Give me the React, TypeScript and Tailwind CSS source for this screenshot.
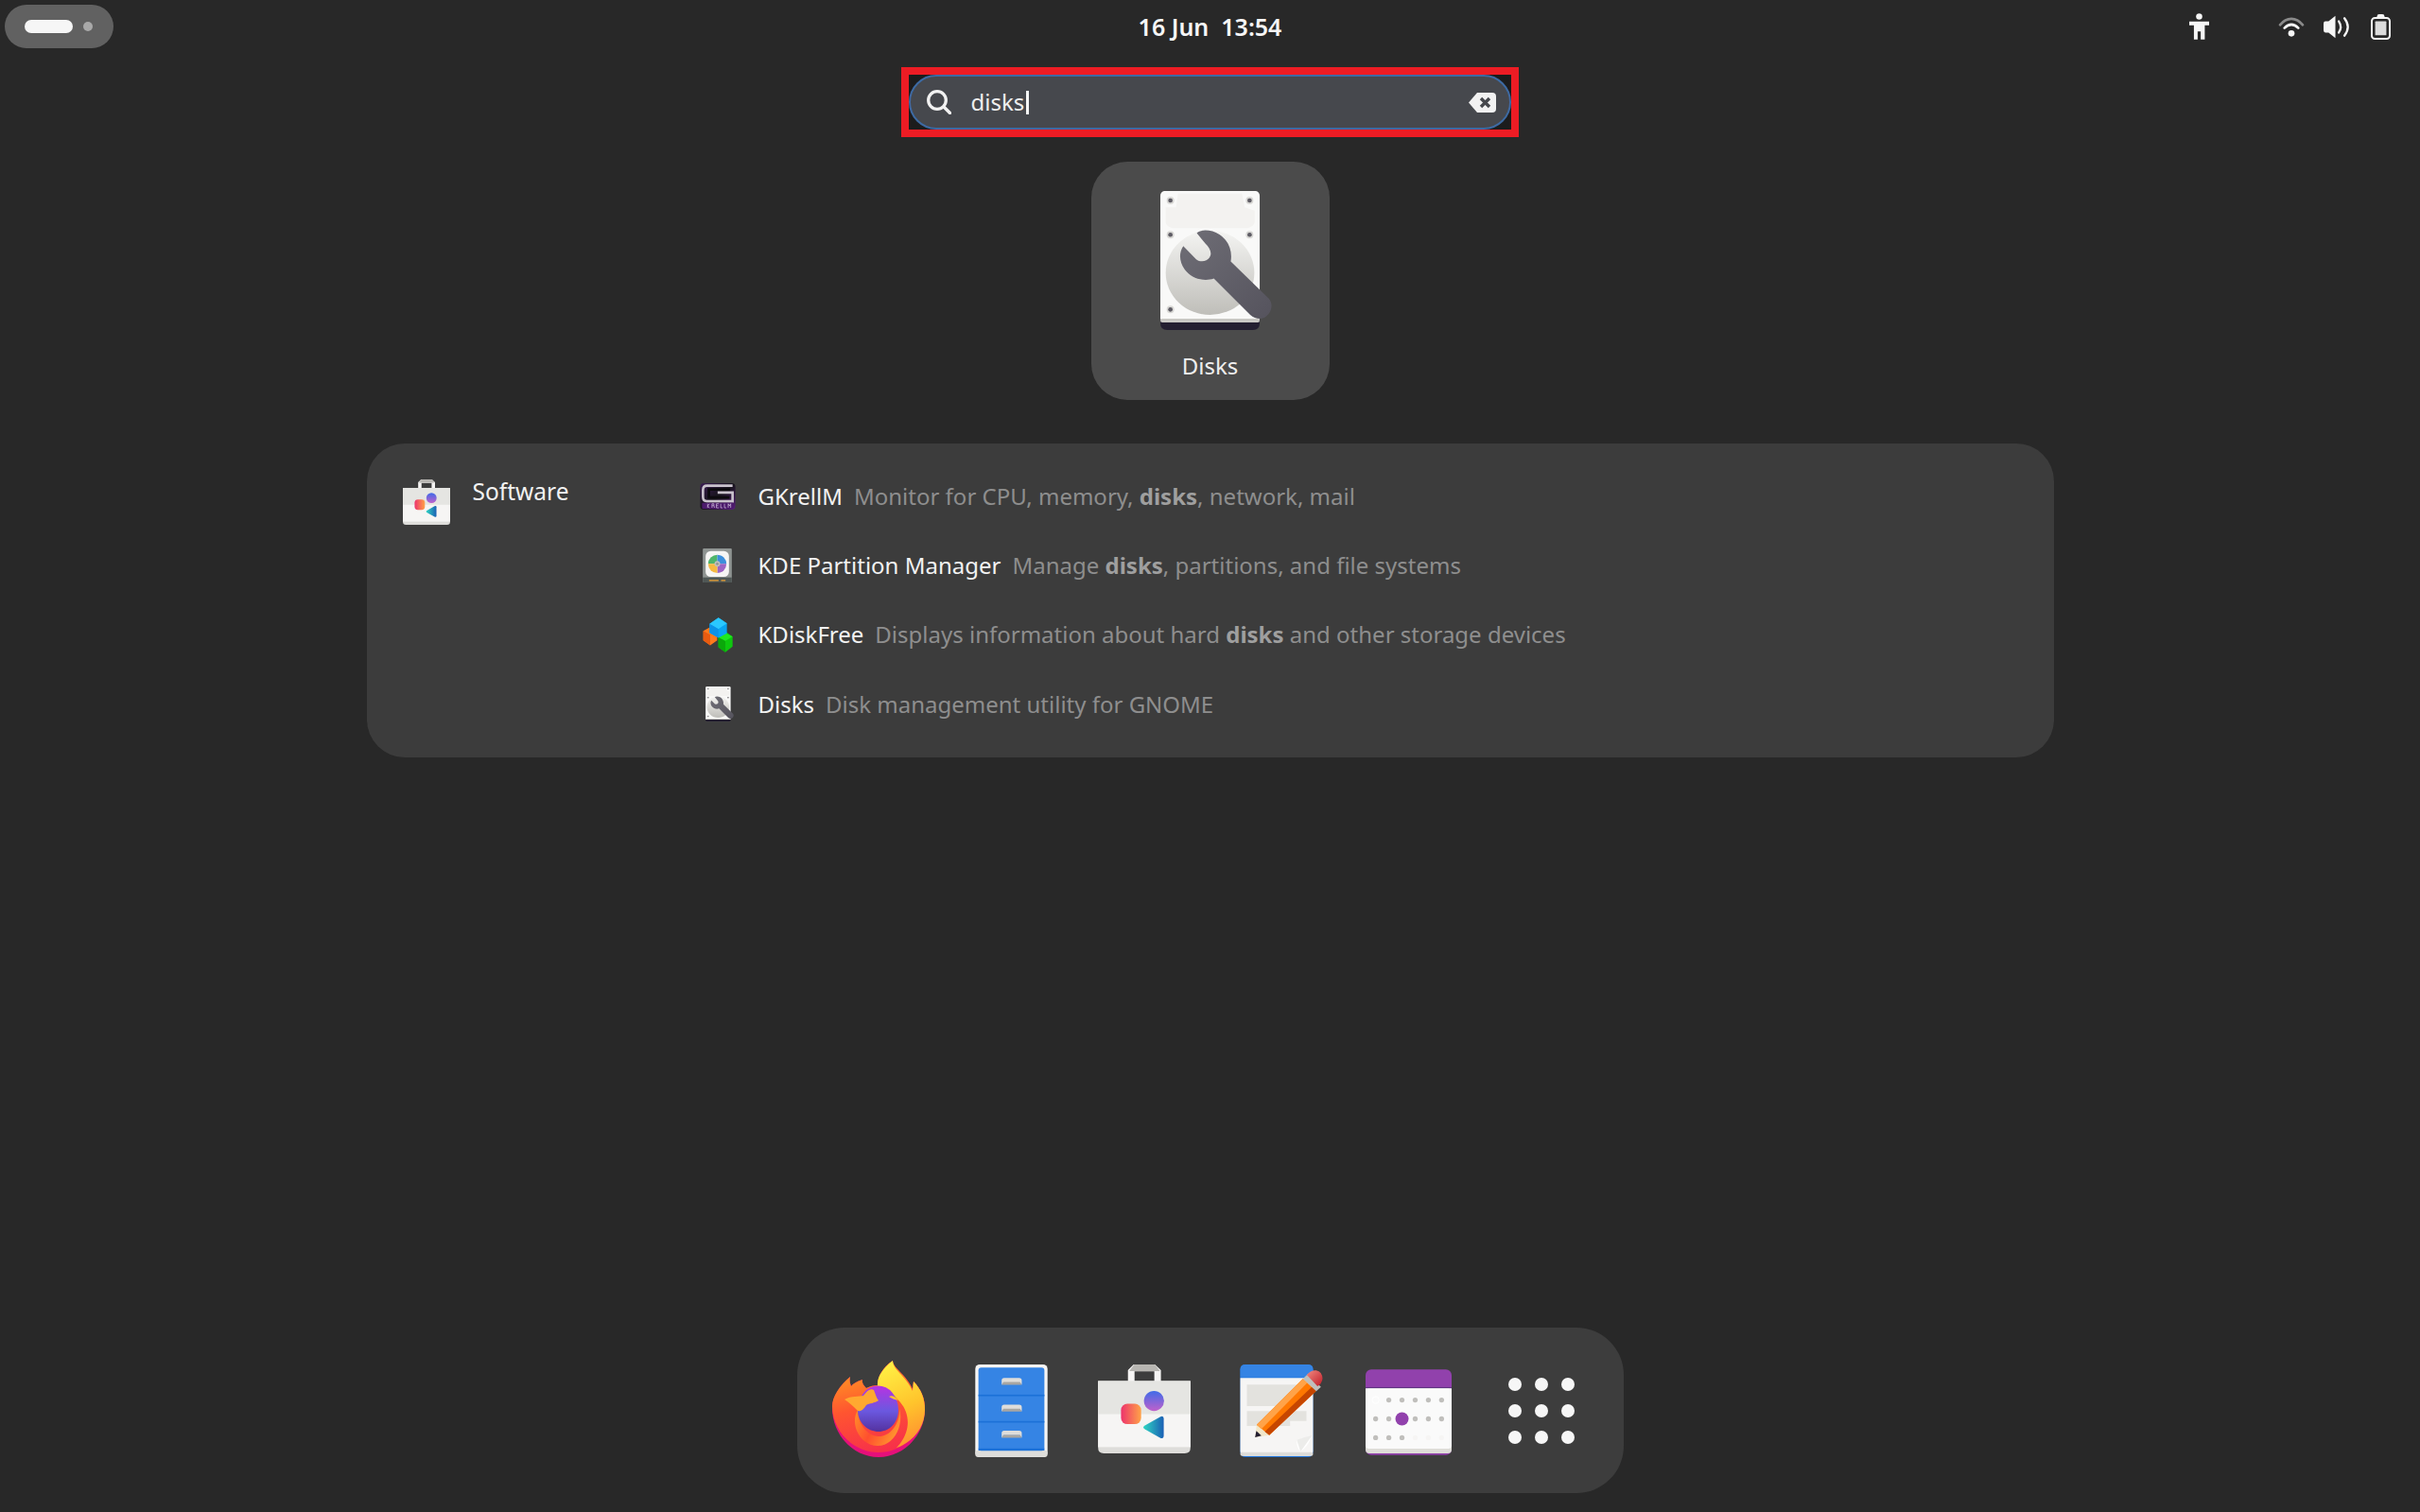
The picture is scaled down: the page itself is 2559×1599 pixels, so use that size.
import React from "react";

const sans = "font-['Noto_Sans','Open_Sans',sans-serif]";

function FirefoxIcon() {
  return (
    <svg viewBox="0 0 100 104" className="w-[100px] h-[104px] -mt-[1px] ml-[1px]">
      <defs>
        <linearGradient id="ffBody" x1="0.25" y1="0" x2="0.5" y2="1">
          <stop offset="0" stopColor="#ffa51f" />
          <stop offset="0.5" stopColor="#ff5530" />
          <stop offset="1" stopColor="#f7304a" />
        </linearGradient>
        <linearGradient id="ffTop" x1="0.35" y1="0" x2="0.6" y2="1">
          <stop offset="0" stopColor="#fff044" />
          <stop offset="0.55" stopColor="#ffc42c" />
          <stop offset="1" stopColor="#ff8f30" />
        </linearGradient>
        <linearGradient id="ffGlobe" x1="0.5" y1="0" x2="0.5" y2="1">
          <stop offset="0" stopColor="#b833e1" />
          <stop offset="0.55" stopColor="#6b58e0" />
          <stop offset="1" stopColor="#54329f" />
        </linearGradient>
        <linearGradient id="ffRing" x1="0" y1="0.2" x2="1" y2="0.6">
          <stop offset="0" stopColor="#ff8a2a" />
          <stop offset="0.45" stopColor="#ff4f2e" />
          <stop offset="1" stopColor="#ff9a2e" />
        </linearGradient>
      </defs>
      <path d="M0 50C0 78 22 102 49 102C76 102 98 78 98 52C98 40 94 30 86 22L85 30C78 14 64 8 64 0C52 8 48 18 48 26C44 26 40 27 36 29C33 26 31 23 32 20C26 22 22 24 20 27C19 24 18 21 19 17C8 26 0 38 0 50Z" fill="#e5107a" />
      <path d="M0 48C0 74 22 97 49 97C76 97 98 74 98 50C98 40 94 30 86 22L85 30C78 14 64 8 64 0C52 8 48 18 48 26C44 26 40 27 36 29C33 26 31 23 32 20C26 22 22 24 20 27C19 24 18 21 19 17C8 26 0 38 0 48Z" fill="url(#ffBody)" />
      <path d="M48 27C47 17 54 8 64 0C64 10 78 16 85 32L86 22C94 30 98 40 98 52C98 70 86 86 68 92C82 78 84 58 72 44C66 36 56 29 48 27Z" fill="url(#ffTop)" />
      <path d="M27 52C27 66 37 80 49 80C62 80 72 66 71 50C76 68 66 90 48 90C30 90 18 68 27 52Z" fill="url(#ffRing)" />
      <path d="M27 52A21 25 0 1 1 70 52C70 66 60 75 49 75C38 75 27 66 27 52Z" fill="url(#ffGlobe)" />
      <path d="M13 41C20 37 28 38 33 37C37 32 40 29 44 31C46 36 47 40 49 42C45 45 39 45 36 47C33 52 29 55 26 52C22 48 18 44 13 41Z" fill="#ffa930" />
      <path d="M60 38C63 36 67 38 70 42C66 41 63 40 60 38Z" fill="#ffc42c" />
    </svg>
  );
}

function FilesIcon() {
  return (
    <svg viewBox="575 127 230 295" className="w-[77px] h-[98px]">
      <rect x="575" y="127" width="230" height="295" rx="14" fill="#f6f5f4" />
      <rect x="575" y="400" width="230" height="22" rx="10" fill="#deddda" />
      <rect x="585" y="137" width="210" height="265" rx="9" fill="#3584e4" />
      <rect x="585" y="223" width="210" height="5" fill="#1c71d8" />
      <rect x="585" y="307" width="210" height="5" fill="#1c71d8" />
      <rect x="585" y="394" width="210" height="7" fill="#1c71d8" />
      {[170, 255, 338].map((y) => (
        <g key={y}>
          <path d={`M659 ${y + 22}V${y + 8}Q659 ${y} 667 ${y}H715Q723 ${y} 723 ${y + 8}V${y + 22}L717 ${y + 14}H665Z`} fill="#deddda" />
          <path d={`M659 ${y + 22}L665 ${y + 13}H717L723 ${y + 22}Z`} fill="#a8a6a2" />
        </g>
      ))}
    </svg>
  );
}

function BagIcon({ className }: { className: string }) {
  return (
    <svg viewBox="963 127 294 283" className={className}>
      <defs>
        <linearGradient id="bagC" x1="0" y1="0" x2="0" y2="1">
          <stop offset="0" stopColor="#3f6be8" />
          <stop offset="1" stopColor="#c061cb" />
        </linearGradient>
        <linearGradient id="bagS" x1="0" y1="0" x2="1" y2="0">
          <stop offset="0" stopColor="#ed336c" />
          <stop offset="1" stopColor="#ffa348" />
        </linearGradient>
        <linearGradient id="bagT" x1="0" y1="0" x2="1" y2="0">
          <stop offset="0" stopColor="#2fd6c3" />
          <stop offset="1" stopColor="#1a5fb4" />
        </linearGradient>
      </defs>
      <path d="M1058 182V145L1076 127H1144L1163 145V182H1142V149H1079V182Z" fill="#f6f5f4" />
      <path d="M1062 148L1078 127H1144L1160 148Z" fill="#b8b6b2" />
      <path d="M963 180H1257V392Q1257 410 1239 410H981Q963 410 963 392Z" fill="#deddda" />
      <rect x="963" y="180" width="294" height="210" fill="#f6f5f4" />
      <rect x="963" y="180" width="294" height="105" fill="#e5e5e2" />
      <circle cx="1141" cy="243" r="32" fill="url(#bagC)" />
      <rect x="1036" y="252" width="64" height="65" rx="20" fill="url(#bagS)" />
      <path d="M1112 321L1160 294Q1172 288 1172 300V352Q1172 366 1160 360L1112 333Q1102 327 1112 321Z" fill="url(#bagT)" />
    </svg>
  );
}

function EditorIcon() {
  return (
    <svg viewBox="63 127 293 294" className="w-[98px] h-[98px]">
      <defs>
        <linearGradient id="edE" x1="0" y1="0" x2="1" y2="1">
          <stop offset="0" stopColor="#f08a80" />
          <stop offset="1" stopColor="#c01c28" />
        </linearGradient>
      </defs>
      <rect x="94" y="127" width="231" height="294" rx="16" fill="#1c71d8" />
      <path d="M94 168V143Q94 127 110 127H309Q325 127 325 143V168Z" fill="#3584e4" />
      <path d="M94 170H325V402Q325 417 310 417H109Q94 417 94 402Z" fill="#f6f5f4" />
      <rect x="94" y="405" width="231" height="12" rx="6" fill="#deddda" />
      <path d="M115 191H304V243H247V259H115Z" fill="#e3e2de" />
      <path d="M115 275H304V306H252V322H115Z" fill="#e3e2de" />
      <path d="M273 366Q305 368 322 352Q310 386 285 404Q272 390 273 366Z" fill="#ffffff" />
      <path d="M322 352Q296 358 273 366L285 404Z" fill="#ececea" />
      <path d="M141 358L146 318L186 351Z" fill="#f1e7ca" />
      <path d="M141 358L145 338L161 353Z" fill="#241f31" />
      <path d="M146 318L293 172L335 211L186 351Z" fill="#ff7800" />
      <path d="M146 318L293 172L307 185L161 332Z" fill="#ffa348" />
      <path d="M172 340L321 198L335 211L186 351Z" fill="#c64600" />
      <path d="M293 172L308 158L350 198L335 212Z" fill="#c0bfbc" />
      <path d="M305 160Q318 144 335 146Q354 150 355 172Q353 188 339 196Z" fill="url(#edE)" />
    </svg>
  );
}

function CalendarIcon() {
  const rows: [number, number[], number[]][] = [
    [238, [566, 608, 650, 692, 734], []],
    [298, [524, 566, 650, 692, 734], []],
    [358, [524, 566, 608], [650, 692, 734]],
  ];
  return (
    <svg viewBox="492 141 274 272" className="w-[91px] h-[91px] mt-[3px]">
      <rect x="492" y="141" width="274" height="272" rx="18" fill="#9141ac" />
      <rect x="492" y="200" width="274" height="208" rx="12" fill="#deddd8" />
      <rect x="492" y="197" width="274" height="4" fill="#613583" />
      <path d="M492 201H766V382Q766 393 755 393H503Q492 393 492 382Z" fill="#fafafa" />
      <circle cx="524" cy="238" r="11" fill="none" stroke="#ffffff" strokeWidth="3" />
      {rows.map(([y, gray, light]) => (
        <g key={y}>
          {gray.map((x) => (
            <circle key={x} cx={x} cy={y} r="8" fill="#c0bfbc" />
          ))}
          {light.map((x) => (
            <circle key={x} cx={x} cy={y} r="8" fill="#f6f5f4" />
          ))}
        </g>
      ))}
      <circle cx="608" cy="298" r="21" fill="#9141ac" />
    </svg>
  );
}

function DisksIcon({ className }: { className: string }) {
  const screws = [[294, 158], [546, 158], [294, 267], [546, 267], [294, 505]];
  return (
    <svg viewBox="262 128 355 442" className={className}>
      <defs>
        <linearGradient id="dkP" x1="0" y1="0" x2="0" y2="1">
          <stop offset="0" stopColor="#f4f4f2" />
          <stop offset="1" stopColor="#bfbeb9" />
        </linearGradient>
        <linearGradient id="dkW" x1="0" y1="0" x2="1" y2="1">
          <stop offset="0" stopColor="#6f6e76" />
          <stop offset="1" stopColor="#55535d" />
        </linearGradient>
      </defs>
      <path d="M262 510H578V548Q578 570 556 570H284Q262 570 262 548Z" fill="#241f31" />
      <rect x="262" y="128" width="316" height="418" rx="14" fill="#f9f9f8" />
      <rect x="262" y="534" width="316" height="12" rx="6" fill="#c9c8c4" />
      <path d="M318 136H522L530 180L562 190V228Q560 240 540 246L300 246Q280 240 279 228V180H312Z" fill="#f3f2f0" />
      <ellipse cx="420" cy="388" rx="141" ry="134" fill="url(#dkP)" />
      {screws.map(([x, y]) => (
        <g key={`${x}-${y}`}>
          <circle cx={x} cy={y} r="12" fill="#d9d8d5" />
          <circle cx={x} cy={y} r="7" fill="#5e5c64" />
        </g>
      ))}
      <path d="M378 262C390 248 425 250 450 266C478 284 492 318 486 352L607 470C622 488 616 512 600 526C586 538 564 536 548 522L432 406C398 418 360 404 340 378C322 354 320 325 335 303L376 345C390 356 410 352 418 340C428 326 420 310 405 295Z" fill="url(#dkW)" />
    </svg>
  );
}

function GKrellMIcon() {
  return (
    <svg viewBox="0 0 113 85" className="w-[38px] h-[28px]">
      <defs>
        <linearGradient id="gkB" x1="0" y1="0" x2="1" y2="1">
          <stop offset="0" stopColor="#3b1d52" />
          <stop offset="0.5" stopColor="#17141c" />
          <stop offset="1" stopColor="#5b1f7e" />
        </linearGradient>
      </defs>
      <rect width="113" height="85" rx="12" fill="url(#gkB)" />
      <path d="M104 8H22Q9 8 9 22V44Q9 58 22 58H104V30H56" fill="none" stroke="#c9c2cc" strokeWidth="8" />
      <path d="M96 20H28V46H94" fill="none" stroke="#0c0a0e" strokeWidth="8" />
      <rect x="6" y="63" width="101" height="19" rx="3" fill="#4c1a6c" />
      <path d="M24 79V66M30 66L24 73L30 79M38 79V66H44V72H38M44 72L46 79M52 79V66H60M52 72H58M52 79H60M66 66V79H72M78 66V79H84M90 79V66L94 73L98 66V79" fill="none" stroke="#d9c8e4" strokeWidth="2" />
    </svg>
  );
}

function PartitionIcon() {
  return (
    <svg viewBox="0 0 92 108" className="w-[31px] h-[36px]">
      <rect width="92" height="108" rx="3" fill="#8f9492" />
      <rect y="92" width="92" height="16" fill="#4f5755" />
      <rect x="20" y="99" width="30" height="5" fill="#c68f3c" />
      <rect x="58" y="99" width="14" height="5" fill="#c68f3c" />
      <rect x="9" y="8" width="74" height="82" rx="16" fill="#f6f5f4" />
      <path d="M46 49L17 49A29 29 0 0 1 46 20Z" fill="#4fb56b" />
      <path d="M46 49V20A29 29 0 0 1 75 49Z" fill="#3d8edb" />
      <path d="M46 49H75A29 29 0 0 1 46 78Z" fill="#9c64c4" />
      <path d="M46 49V78A29 29 0 0 1 17 49Z" fill="#f5b942" />
      <circle cx="46" cy="49" r="9" fill="#c0bfbc" />
      <circle cx="46" cy="49" r="4" fill="#8f9492" />
    </svg>
  );
}

function KDiskFreeIcon() {
  return (
    <svg viewBox="0 0 96 110" className="w-[32px] h-[37px]">
      <path d="M2 42L24 30L46 44V72L24 88L2 72Z" fill="#ff7a1c" />
      <path d="M2 42L24 54V88L2 72Z" fill="#e85b10" />
      <path d="M50 52L72 44L95 60V92L72 110L50 94Z" fill="#0ec70e" />
      <path d="M50 62L72 74V110L50 94Z" fill="#0aa80a" />
      <path d="M72 74L95 60L72 48L50 62Z" fill="#1fe81f" />
      <path d="M22 20L50 0L77 18V50L50 64L22 48Z" fill="#0aa4f0" />
      <path d="M22 20L50 36L77 18L50 0Z" fill="#2ac8ff" />
      <path d="M22 20L50 36V64L22 48Z" fill="#0c92e6" />
    </svg>
  );
}

function AccessIcon() {
  return (
    <svg viewBox="105 42 64 84" className="w-[21px] h-[28px] fill-[#f6f6f6]">
      <circle cx="137" cy="52" r="10" />
      <path d="M105 68H169V80H155V126H142V100H132V126H120V80H105Z" />
    </svg>
  );
}

function WifiIcon() {
  return (
    <svg viewBox="378 50 84 66" className="w-[28px] h-[22px]" fill="none">
      <path d="M384 78C405 52 435 52 456 78" stroke="#8a8a8a" strokeWidth="8" strokeLinecap="round" />
      <path d="M398 88C412 74 428 74 442 88" stroke="#f6f6f6" strokeWidth="8" strokeLinecap="round" />
      <circle cx="420" cy="105" r="10" fill="#f6f6f6" />
    </svg>
  );
}

function SoundIcon() {
  return (
    <svg viewBox="525 46 85 76" className="w-[28px] h-[25px]" fill="none">
      <path d="M563 48V120L541 102H531Q525 102 525 95V73Q525 66 531 66H541Z" fill="#f6f6f6" />
      <path d="M574 66Q586 84 574 102" stroke="#f6f6f6" strokeWidth="7" strokeLinecap="round" />
      <path d="M592 56Q614 84 592 112" stroke="#f6f6f6" strokeWidth="7" strokeLinecap="round" />
    </svg>
  );
}

function BatteryIcon() {
  return (
    <svg viewBox="683 43 64 82" className="w-[21px] h-[27px]" fill="none">
      <path d="M703 56V50Q703 43 710 43H720Q727 43 727 50V56Z" fill="#f6f6f6" />
      <rect x="686" y="55" width="58" height="67" rx="10" stroke="#f6f6f6" strokeWidth="6" />
      <rect x="697" y="66" width="36" height="45" rx="2" fill="#dcdcdc" />
    </svg>
  );
}

function SearchIcon() {
  return (
    <svg viewBox="0 0 26 26" className="w-[26px] h-[26px]" fill="none">
      <circle cx="11" cy="11" r="9.3" stroke="#f2f2f2" strokeWidth="3.3" />
      <path d="M18 18L24.5 24.5" stroke="#f2f2f2" strokeWidth="3.3" strokeLinecap="round" />
    </svg>
  );
}

function ClearIcon() {
  return (
    <svg viewBox="0 0 29 21" className="w-[29px] h-[21px]">
      <path d="M9 0H25Q29 0 29 4V17Q29 21 25 21H9L0 10.5Z" fill="#f2f2f2" />
      <path d="M13 6L22 15M22 6L13 15" stroke="#46484d" strokeWidth="3.4" />
    </svg>
  );
}

function Row({ icon, title, children }: { icon: React.ReactNode; title: string; children: React.ReactNode }) {
  return (
    <div className="h-[73.33px] flex items-center">
      <div className="w-[40px] flex justify-center">{icon}</div>
      <div className="ml-[23px] flex items-baseline gap-[12px] text-[24px] leading-none whitespace-nowrap">
        <span className="text-[#f2f2f2]">{title}</span>
        <span className="text-[#8e8e8e]">{children}</span>
      </div>
    </div>
  );
}

const Bold = ({ children }: { children: string }) => <b className="font-bold text-[#9f9f9f]">{children}</b>;

export default function App() {
  return (
    <div className={`${sans} h-[1599px] w-full overflow-hidden bg-[#282828] flex flex-col items-center text-[#f2f2f2]`}>
      <div className="w-full h-[56px] shrink-0 grid grid-cols-3 items-center">
        <div className="pl-[5px]">
          <div className="w-[115px] h-[46px] rounded-full bg-[#616161] flex items-center pl-[21px] gap-[11px]">
            <div className="w-[51px] h-[14px] rounded-full bg-[#f6f6f6]" />
            <div className="w-[10px] h-[10px] rounded-full bg-[#a9a9a9]" />
          </div>
        </div>
        <div className="text-center text-[25px] font-semibold whitespace-pre leading-none text-[#f6f6f6]">16 Jun  13:54</div>
        <div className="flex justify-end items-center pr-[31px]">
          <AccessIcon />
          <div className="ml-[73px]"><WifiIcon /></div>
          <div className="ml-[20px]"><SoundIcon /></div>
          <div className="ml-[22px]"><BatteryIcon /></div>
        </div>
      </div>

      <div className="mt-[15px] w-[653px] h-[74px] -ml-[1px] shrink-0 border-8 border-[#ed1c24] bg-[#1c1c1c]">
        <div className="h-full rounded-full bg-[#46484d] border-2 border-[#3d6aa3] flex items-center pl-[17px] pr-[14px]">
          <SearchIcon />
          <div className="ml-[21px] text-[24px] leading-none text-[#eeeeee] flex items-center">
            disks
            <div className="ml-[2px] w-[3px] h-[25px] bg-[#f6f6f6]" />
          </div>
          <div className="ml-auto mt-[1px]"><ClearIcon /></div>
        </div>
      </div>

      <div className="mt-[26px] w-[252px] h-[252px] shrink-0 rounded-[38px] bg-[#4b4b4b] flex flex-col items-center pt-[31px]">
        <DisksIcon className="w-[118px] h-[147px] ml-[12px]" />
        <div className="mt-[23px] text-[24px] leading-[30px] text-[#eeeeee]">Disks</div>
      </div>

      <div className="mt-[46px] w-[1784px] h-[332px] shrink-0 rounded-[40px] bg-[#3c3c3c] flex">
        <div className="w-[351px] pl-[38px] pt-[38px] flex items-start">
          <BagIcon className="w-[50px] h-[48px]" />
          <div className="ml-[24px] -mt-[5px] text-[24.5px] leading-[36px] text-[#f2f2f2]">Software</div>
        </div>
        <div className="pt-[19px]">
          <Row icon={<GKrellMIcon />} title="GKrellM">Monitor for CPU, memory, <Bold>disks</Bold>, network, mail</Row>
          <Row icon={<PartitionIcon />} title="KDE Partition Manager">Manage <Bold>disks</Bold>, partitions, and file systems</Row>
          <Row icon={<KDiskFreeIcon />} title="KDiskFree">Displays information about hard <Bold>disks</Bold> and other storage devices</Row>
          <Row icon={<DisksIcon className="w-[30px] h-[37px] ml-[4px]" />} title="Disks">Disk management utility for GNOME</Row>
        </div>
      </div>

      <div className="mt-auto mb-[20px] w-[874px] h-[175px] shrink-0 rounded-[50px] bg-[#3d3d3d] flex items-center px-[17px]">
        <div className="w-[140px] flex justify-center"><FirefoxIcon /></div>
        <div className="w-[140px] flex justify-center"><FilesIcon /></div>
        <div className="w-[140px] flex justify-center"><BagIcon className="w-[98px] h-[94px] -mt-[3px]" /></div>
        <div className="w-[140px] flex justify-center"><EditorIcon /></div>
        <div className="w-[140px] flex justify-center"><CalendarIcon /></div>
        <div className="w-[140px] flex justify-center">
          <div className="grid grid-cols-3 gap-[14px]">
            {[0, 1, 2, 3, 4, 5, 6, 7, 8].map((i) => (
              <div key={i} className="w-[14px] h-[14px] rounded-full bg-[#f6f6f6]" />
            ))}
          </div>
        </div>
      </div>
    </div>
  );
}
